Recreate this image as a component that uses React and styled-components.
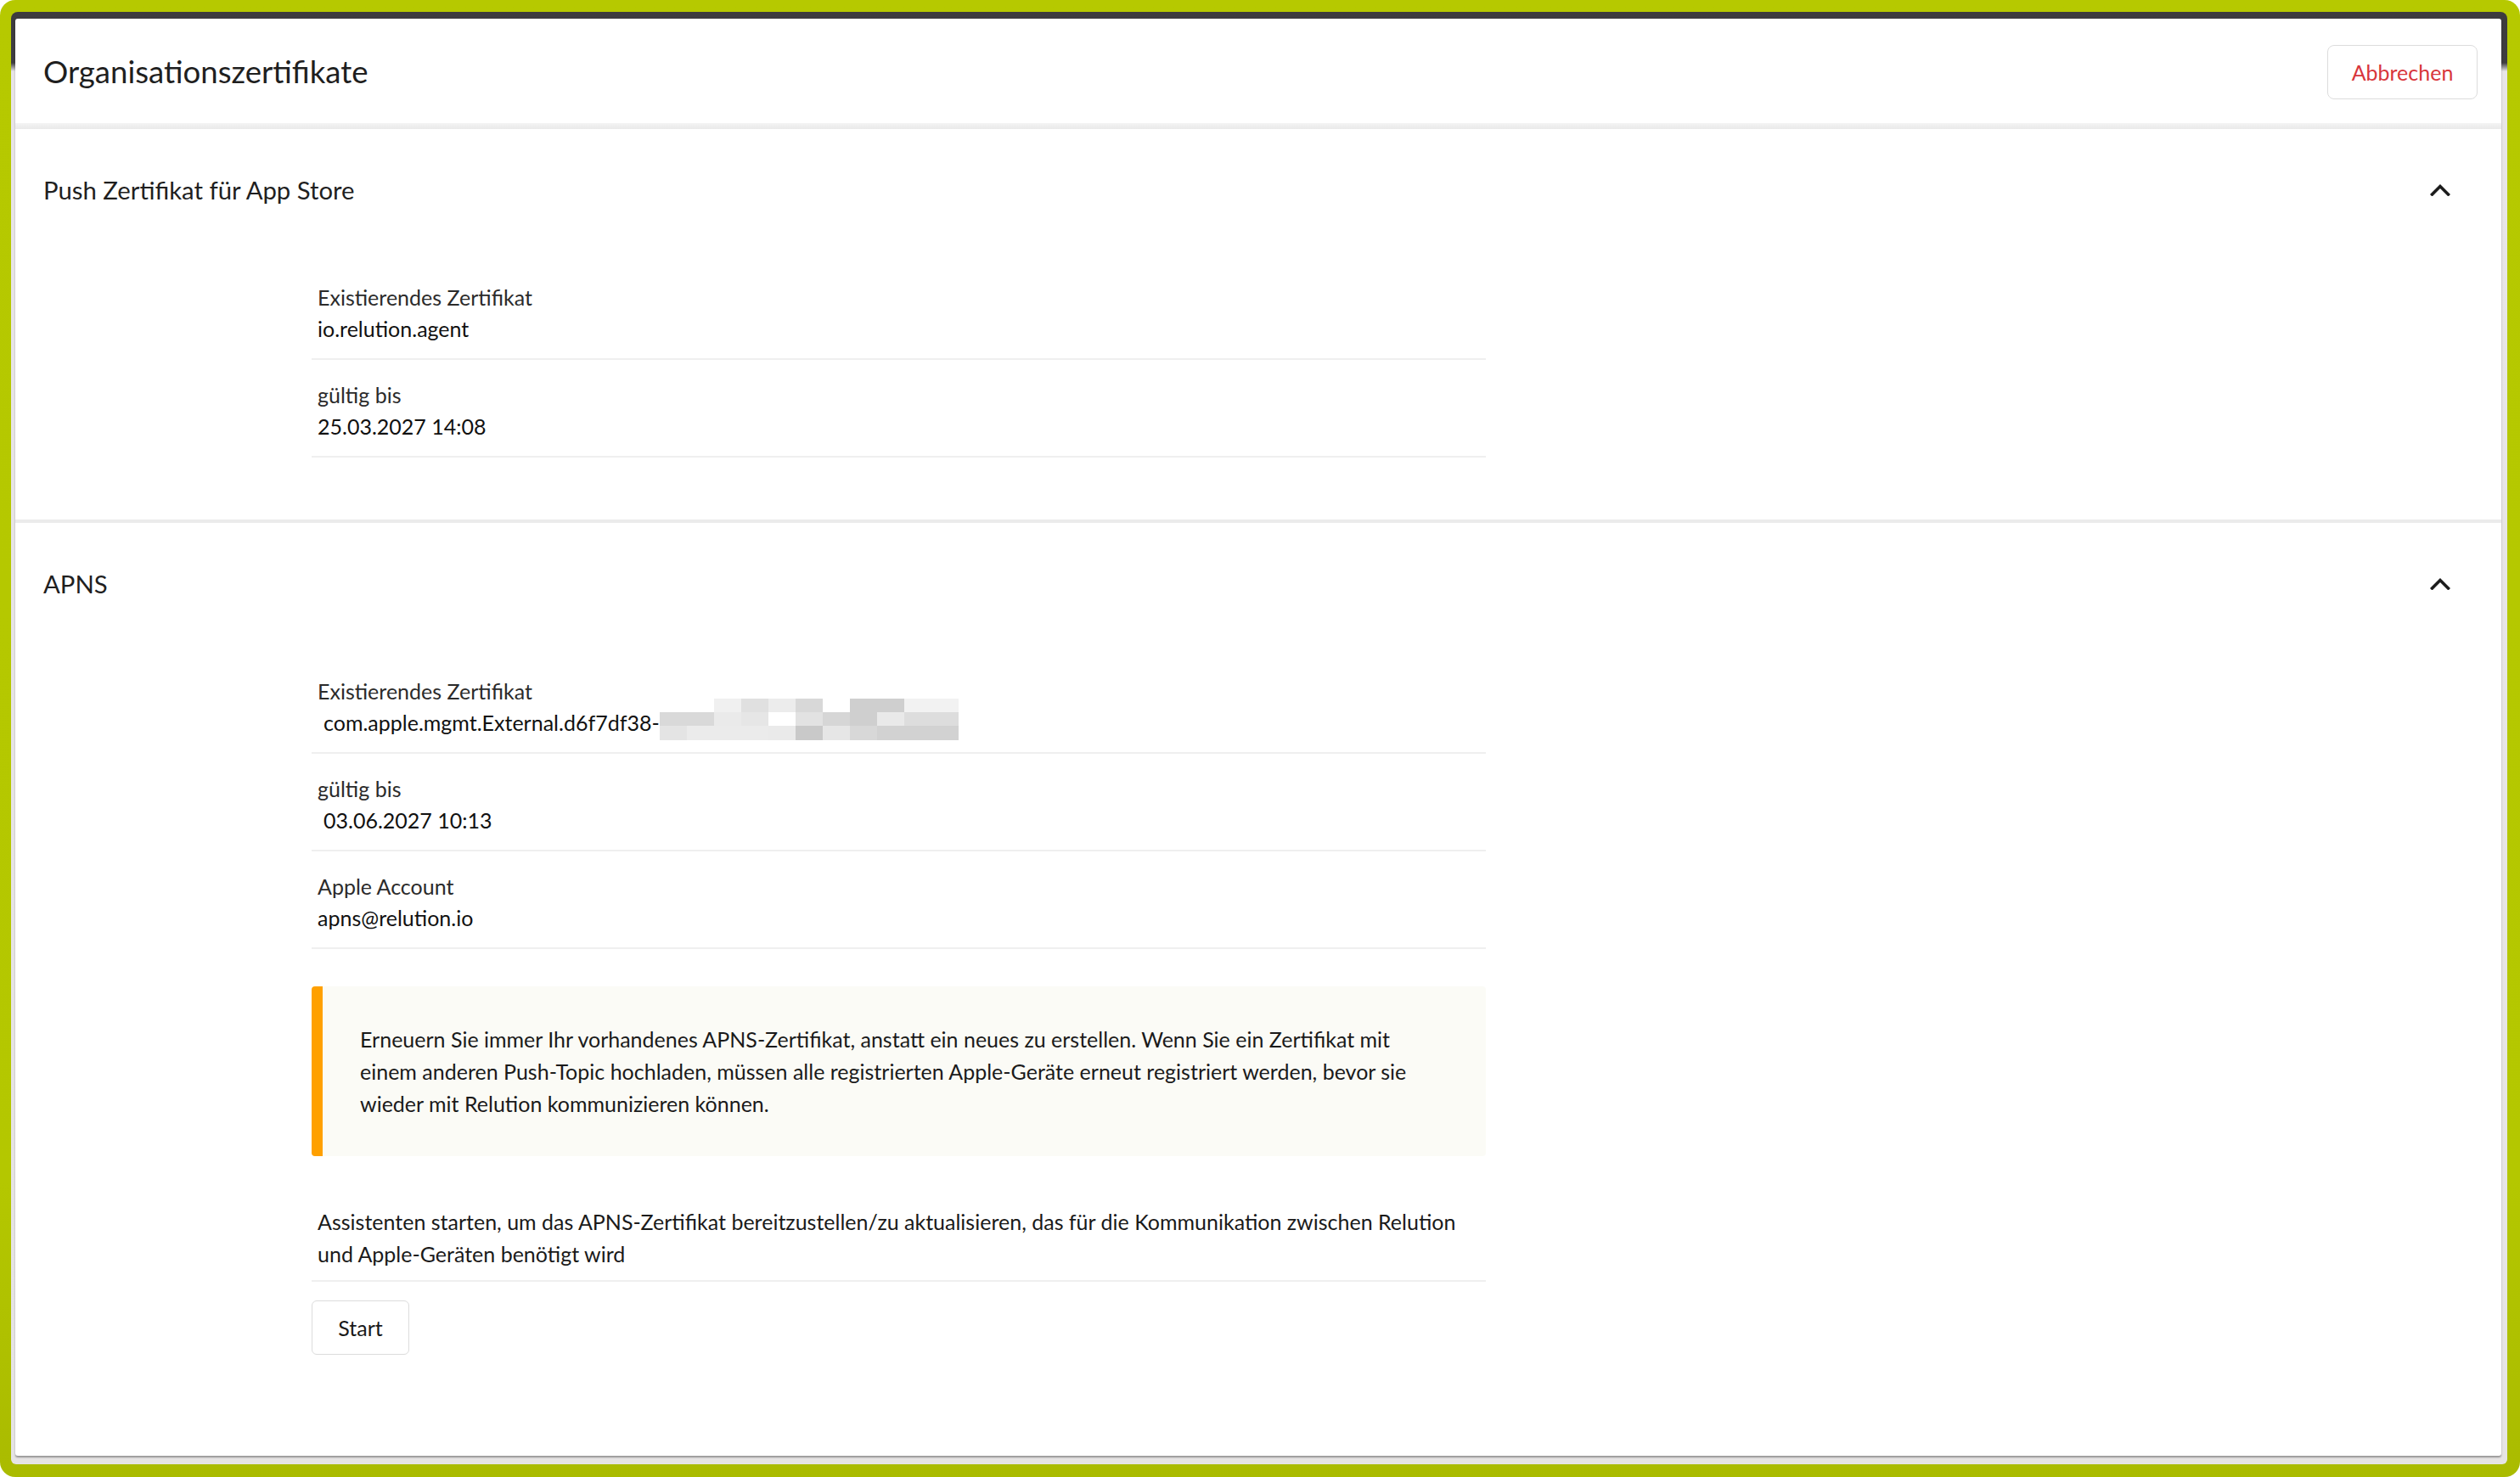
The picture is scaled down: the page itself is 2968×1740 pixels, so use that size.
import styled, { createGlobalStyle } from "styled-components";

const GlobalStyle = createGlobalStyle`
  html, body {
    margin: 0;
    padding: 0;
    background: #ffffff;
  }
  * {
    box-sizing: border-box;
  }
`;

const mosaic = [
  ["#ffffff", "#ffffff", "#f0f0f0", "#e0e0e0", "#ececec", "#d8d8d8", "#ffffff", "#cfcfcf", "#cfcfcf", "#f2f2f2", "#f2f2f2"],
  ["#d9d9d9", "#d9d9d9", "#eaeaea", "#e6e6e6", "#ffffff", "#e2e2e2", "#d6d6d6", "#cfcfcf", "#e9e9e9", "#dddddd", "#dddddd"],
  ["#e4e4e4", "#ebebeb", "#ebebeb", "#ebebeb", "#eaeaea", "#c9c9c9", "#e6e6e6", "#d8d8d8", "#d2d2d2", "#d2d2d2", "#d2d2d2"],
];

const Chevron = () => (
  <svg width="24" height="15" viewBox="0 0 24 15" fill="none">
    <path d="M2.5 13 L12 3.5 L21.5 13" stroke="#1c1c1c" strokeWidth="3.6" strokeLinecap="square" />
  </svg>
);

const Field = ({ label, value, children, indent }) => (
  <Row>
    <Label>{label}</Label>
    <Value $indent={indent}>
      {value}
      {children}
    </Value>
  </Row>
);

const App = () => {
  return (
    <>
      <GlobalStyle />
      <Frame>
        <Screen>
          <Modal>
            <Header>
              <Title>Organisationszertifikate</Title>
              <CancelButton>Abbrechen</CancelButton>
            </Header>
            <HeaderShadow />

            <Section>
              <SectionHead>
                <SectionTitle>Push Zertifikat für App Store</SectionTitle>
                <Chevron />
              </SectionHead>
              <SectionBody $bottom={73}>
                <Field label="Existierendes Zertifikat" value="io.relution.agent" />
                <Field label="gültig bis" value="25.03.2027 14:08" />
              </SectionBody>
            </Section>

            <SectionDivider />

            <Section>
              <SectionHead>
                <SectionTitle>APNS</SectionTitle>
                <Chevron />
              </SectionHead>
              <SectionBody $bottom={118}>
                <Field label="Existierendes Zertifikat" value="com.apple.mgmt.External.d6f7df38-" indent>
                  <Mosaic>
                    {mosaic.flat().map((c, i) => (
                      <Cell key={i} $color={c} />
                    ))}
                  </Mosaic>
                </Field>
                <Field label="gültig bis" value="03.06.2027 10:13" indent />
                <Field label="Apple Account" value="apns@relution.io" />

                <Notice>
                  Erneuern Sie immer Ihr vorhandenes APNS-Zertifikat, anstatt ein neues zu erstellen. Wenn Sie ein
                  Zertifikat mit einem anderen Push-Topic hochladen, müssen alle registrierten Apple-Geräte erneut
                  registriert werden, bevor sie wieder mit Relution kommunizieren können.
                </Notice>

                <Hint>
                  Assistenten starten, um das APNS-Zertifikat bereitzustellen/zu aktualisieren, das für die
                  Kommunikation zwischen Relution und Apple-Geräten benötigt wird
                </Hint>
                <StartButton>Start</StartButton>
              </SectionBody>
            </Section>
          </Modal>
        </Screen>
      </Frame>
    </>
  );
};

export default App;

const Frame = styled.div`
  width: 2968px;
  height: 1740px;
  background: linear-gradient(to bottom, #b6c900 0%, #b4c700 80%, #aabb00 100%);
  border-radius: 18px;
  padding: 14px 15px 15px 13px;
  font-family: Lato, "Liberation Sans", sans-serif;
  color: #222;
`;

const Screen = styled.div`
  height: 100%;
  border-radius: 8px 8px 6px 6px;
  background: linear-gradient(to bottom, #3d3b3e 0px, #3f3d40 60px, #e8e5e7 70px, #e6e4e4 100%);
  padding: 8px 7px 10px 5px;
  display: flex;
`;

const Modal = styled.div`
  flex: 1;
  background: #ffffff;
  border-radius: 3px;
  box-shadow: 0 2px 2px rgba(0, 0, 0, 0.35);
  display: flex;
  flex-direction: column;
  overflow: hidden;
`;

const Header = styled.div`
  height: 123px;
  flex-shrink: 0;
  display: flex;
  align-items: center;
  justify-content: space-between;
  padding: 0 28px 0 33px;
`;

const Title = styled.h1`
  margin: 0;
  font-size: 36.6px;
  font-weight: 400;
  color: #1f1f1f;
`;

const CancelButton = styled.button`
  width: 177px;
  height: 64px;
  border: 1px solid #dcdcdc;
  border-radius: 8px;
  background: #fff;
  color: #d8363c;
  font-family: inherit;
  font-size: 25px;
  padding: 0;
  margin-top: 2px;
`;

const HeaderShadow = styled.div`
  height: 7px;
  flex-shrink: 0;
  background: linear-gradient(to bottom, #f4f4f4, #e9e9e9);
`;

const Section = styled.section`
  display: flex;
  flex-direction: column;
`;

const SectionHead = styled.div`
  height: 142px;
  display: flex;
  align-items: center;
  justify-content: space-between;
  padding: 0 60px 0 33px;
`;

const SectionTitle = styled.h2`
  margin: 0;
  font-size: 29.3px;
  font-weight: 400;
  color: #1f1f1f;
`;

const SectionBody = styled.div`
  width: 1732px;
  padding: 15px 0 ${(p) => p.$bottom}px 349px;
  display: flex;
  flex-direction: column;
`;

const SectionDivider = styled.div`
  height: 4px;
  background: #ebebeb;
  flex-shrink: 0;
`;

const Row = styled.div`
  padding: 23px 7px 16px;
  border-bottom: 2px solid #efefef;
`;

const Label = styled.div`
  font-size: 25px;
  line-height: 37px;
  color: #2b2b2b;
`;

const Value = styled.div`
  font-size: 25px;
  line-height: 37px;
  height: 37px;
  color: #111;
  padding-left: ${(p) => (p.$indent ? 7 : 0)}px;
  display: flex;
  align-items: flex-start;
`;

const Mosaic = styled.span`
  display: inline-grid;
  grid-template-columns: repeat(11, 32px);
  grid-template-rows: 16px 16px 17px;
  margin-top: -10px;
`;

const Cell = styled.span`
  background: ${(p) => p.$color};
`;

const Notice = styled.div`
  margin-top: 44px;
  background: #fbfbf6;
  border-left: 13px solid #ffa000;
  border-radius: 4px;
  padding: 43px 44px;
  font-size: 25px;
  line-height: 38px;
  color: #1a1a1a;
`;

const Hint = styled.div`
  margin-top: 58px;
  padding: 0 7px 12px;
  border-bottom: 2px solid #efefef;
  font-size: 25px;
  line-height: 38px;
  color: #1a1a1a;
`;

const StartButton = styled.button`
  align-self: flex-start;
  margin-top: 22px;
  width: 115px;
  height: 64px;
  border: 1px solid #dcdcdc;
  border-radius: 6px;
  background: #fff;
  color: #1a1a1a;
  font-family: inherit;
  font-size: 25px;
  padding: 0;
`;
